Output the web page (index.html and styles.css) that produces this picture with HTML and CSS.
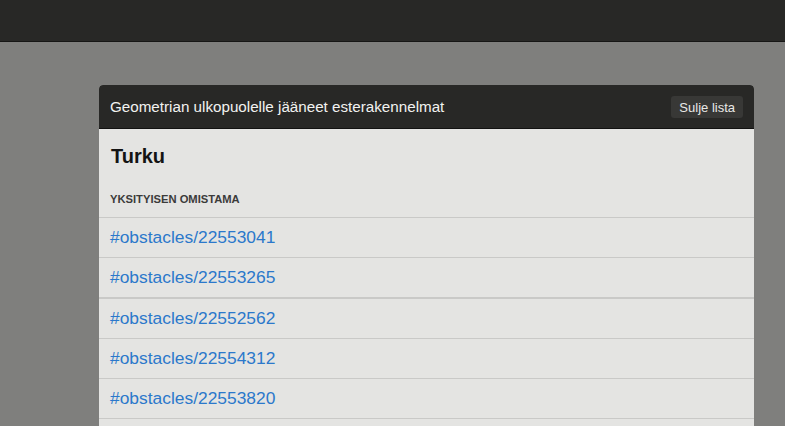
FILE: index.html
```html
<!DOCTYPE html>
<html lang="fi">
<head>
<meta charset="utf-8">
<title>Esterakennelmat</title>
<link rel="stylesheet" href="styles.css">
</head>
<body>
<header class="topbar"></header>
<main class="stage">
  <section class="modal">
    <div class="modal-header">
      <h1 class="modal-title">Geometrian ulkopuolelle jääneet esterakennelmat</h1>
      <button class="close-btn" type="button">Sulje lista</button>
    </div>
    <div class="modal-body">
      <h2 class="city">Turku</h2>
      <div class="group-label">YKSITYISEN OMISTAMA</div>
      <ul class="obstacle-list">
        <li class="obstacle"><a href="#obstacles/22553041">#obstacles/22553041</a></li>
        <li class="obstacle"><a href="#obstacles/22553265">#obstacles/22553265</a></li>
        <li class="obstacle obstacle-split"><a href="#obstacles/22552562">#obstacles/22552562</a></li>
        <li class="obstacle"><a href="#obstacles/22554312">#obstacles/22554312</a></li>
        <li class="obstacle"><a href="#obstacles/22553820">#obstacles/22553820</a></li>
      </ul>
    </div>
  </section>
</main>
</body>
</html>
```

FILE: styles.css
```css
html, body {
  margin: 0;
  padding: 0;
  height: 100%;
  overflow: hidden;
}
body {
  background: #7f7f7d;
  font-family: "Liberation Sans", Arial, sans-serif;
}
.topbar {
  height: 41px;
  background: #282826;
  border-bottom: 1px solid #161615;
}
.stage {
  padding: 43px 0 0 99px;
}
.modal {
  width: 655px;
  background: #e4e4e2;
  border-radius: 4px 4px 0 0;
}
.modal-header {
  height: 44px;
  box-sizing: border-box;
  background: #282826;
  border-bottom: 1px solid #121211;
  border-radius: 4px 4px 0 0;
  display: flex;
  align-items: center;
  justify-content: space-between;
  padding: 0 11px 0 11px;
}
.modal-title {
  margin: 0;
  font-size: 15.2px;
  font-weight: normal;
  color: #f2f2f0;
}
.close-btn {
  font-family: inherit;
  font-size: 13px;
  color: #e8e8e6;
  background: #383836;
  border: none;
  border-radius: 3px;
  height: 22px;
  padding: 0 8px;
  margin-top: 1px;
}
.modal-body {
  background: #e4e4e2;
  padding-bottom: 40px;
}
.city {
  margin: 0;
  padding: 15px 11px 0 12px;
  font-size: 20px;
  line-height: 24px;
  font-weight: bold;
  color: #141414;
}
.group-label {
  margin-top: 23px;
  padding: 0 11px 10px;
  font-size: 11.2px;
  line-height: 16px;
  font-weight: bold;
  color: #3b3b3a;
}
.obstacle-list {
  list-style: none;
  margin: 0;
  padding: 0;
  border-top: 1px solid #c9c9c7;
}
.obstacle {
  height: 39px;
  line-height: 39px;
  border-bottom: 1px solid #c9c9c7;
  padding: 0 11px;
}
.obstacle-split {
  border-top: 1px solid #c9c9c7;
}
.obstacle a {
  color: #2b78cb;
  font-size: 17.4px;
  text-decoration: none;
}
```
